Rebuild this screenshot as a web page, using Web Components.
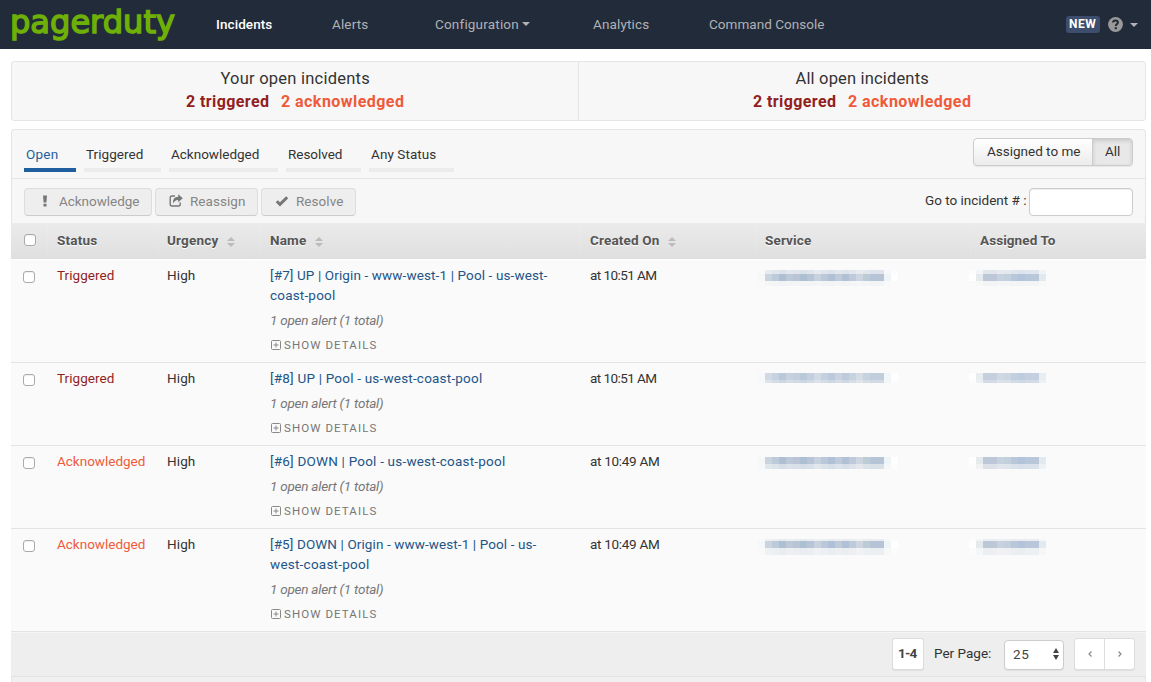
<!DOCTYPE html>
<html lang="en">
<head>
<meta charset="utf-8">
<title>Incidents</title>
<style>
html,body{margin:0;background:#fff}
body{font-family:Roboto,"Liberation Sans",sans-serif;font-size:13.5px;line-height:20px;color:#333;height:682px;overflow:hidden}
</style>
</head>
<body>
<pd-app></pd-app>
<script>
const make = (name, html, setup) => customElements.define(name, class extends HTMLElement {
  connectedCallback() {
    if (this.shadowRoot) return;
    const root = this.attachShadow({mode: 'open'});
    const t = document.createElement('template');
    t.innerHTML = typeof html === 'function' ? html(this) : html;
    root.append(t.content.cloneNode(true));
    if (setup) setup(this, root);
  }
});

// Text line tracked to a fixed measure
make('fit-text', '<style>:host{display:inline-block;white-space:pre}span{display:inline-block}</style><span><slot></slot></span>', (el, root) => {
  const w = +el.getAttribute('w'), span = root.querySelector('span');
  const n = el.textContent.length;
  el.style.width = w + 'px';
  span.style.letterSpacing = '0px';
  const natural = span.getBoundingClientRect().width;
  span.style.letterSpacing = ((w + .4 - natural) / n) + 'px';
});

make('pd-caret', '<style>:host{display:block;width:0;height:0;border:4px solid transparent;border-top-color:currentColor;border-bottom:0}</style>');

make('pd-nav', `<style>
:host{display:flex;height:49px;background:#222b3a;color:#b0b2b5;align-items:center;box-sizing:border-box;padding:0 13px 0 11px}
svg{display:block}
.logo{width:166px;height:49px;margin-right:39px}
nav{display:flex;flex:1;align-items:center;padding-bottom:1px}
a{display:flex;align-items:center;gap:4px}
.on{color:#fff;font-weight:500}
.new{background:#3c4d6e;color:#fff;font-size:12px;font-weight:700;line-height:17px;height:17px;border-radius:3px;padding:0 4px 0 3px;margin-right:8px}
.help{margin-right:7px}
</style>
<svg class="logo" viewBox="0 0 166 49"><text x="-1" y="33" textLength="165" lengthAdjust="spacingAndGlyphs" font-family="DejaVu Sans" font-size="32" fill="#6eb007" stroke="#6eb007" stroke-width="1.5">pagerduty</text></svg>
<nav>
<a class="on" style="width:116px"><fit-text w="56">Incidents</fit-text></a>
<a style="width:103px"><fit-text w="36">Alerts</fit-text></a>
<a style="width:158px"><fit-text w="83">Configuration</fit-text><pd-caret></pd-caret></a>
<a style="width:116px"><fit-text w="56">Analytics</fit-text></a>
<a><fit-text w="115">Command Console</fit-text></a>
</nav>
<span class="new"><fit-text w="27">NEW</fit-text></span>
<svg class="help" width="15" height="15" viewBox="0 0 15 15"><circle cx="7.5" cy="7.5" r="7.4" fill="#999"/><path d="M5 5.5C5.2 2.8 9.9 2.9 9.9 5.5c0 1.7-2.1 1.6-2.1 3.5" fill="none" stroke="#222b3a" stroke-width="2"/><rect x="6.7" y="10.2" width="2.2" height="2" fill="#222b3a"/></svg>
<pd-caret></pd-caret>`);

make('pd-count', `<style>
:host{display:block;flex:1;text-align:center;padding-top:6px;font-size:16.5px;line-height:22px;box-sizing:border-box}
div{display:flex;justify-content:center;gap:12px;font-size:16px;font-weight:700;line-height:24px}
.t{color:#921e1e}.a{color:#ef5a3a}
</style><slot></slot><div><fit-text w="83" class="t">2 triggered</fit-text><fit-text w="123" class="a">2 acknowledged</fit-text></div>`);

make('pd-summary', `<style>
:host{display:flex;margin:12px 5px 0 11px;height:60px;box-sizing:border-box;border:1px solid #e5e5e5;border-radius:3px;background:#f7f7f7}
.first{border-right:1px solid #e5e5e5}
</style><pd-count class="first"><fit-text w="149">Your open incidents</fit-text></pd-count><pd-count><fit-text w="133">All open incidents</fit-text></pd-count>`);

make('pd-tabs', `<style>
:host{display:flex;height:49px;box-sizing:border-box;border-bottom:1px solid #e5e5e5;padding:8px 12px 0}
.tab{height:34px;box-sizing:border-box;border-bottom:4px solid #ececec;padding:6px 0 0 2px;margin-right:8px}
.on{color:#1f5f9f;border-color:#1f5f9f}
.seg{margin-left:auto;display:flex;height:28px;box-sizing:border-box;border:1px solid #ccc;border-radius:4px;line-height:25px;overflow:hidden;background:linear-gradient(#fff,#ececec);box-shadow:0 1px 1px #0001}
.seg span{padding:0 12px 0 13px}.seg .all{padding:0 12px;background:#e8e8e8;border-left:1px solid #ccc;box-shadow:inset 0 2px 4px #0002}
</style>
<div class="tab on" style="width:52px"><fit-text w="32">Open</fit-text></div>
<div class="tab" style="width:77px"><fit-text w="57">Triggered</fit-text></div>
<div class="tab" style="width:109px"><fit-text w="88">Acknowledged</fit-text></div>
<div class="tab" style="width:75px"><fit-text w="54">Resolved</fit-text></div>
<div class="tab" style="width:85px"><fit-text w="65">Any Status</fit-text></div>
<div class="seg"><span><fit-text w="93">Assigned to me</fit-text></span><span class="all"><fit-text w="15">All</fit-text></span></div>`);

make('pd-button', `<style>
:host{display:flex;box-sizing:border-box;height:28px;border:1px solid #ddd;border-bottom-color:#ccc;border-radius:4px;background:#eee;color:#858585;align-items:center;padding:0 0 2px 13px;gap:7px}
</style><slot name="icon"></slot><slot></slot>`);

make('pd-toolbar', `<style>
:host{display:flex;height:44px;box-sizing:border-box;padding:9px 12px 0;gap:3px}
svg{display:block;width:14px;height:14px}
label{margin-left:auto;display:flex;gap:3px;line-height:25px}
input{box-sizing:border-box;width:104px;height:28px;border:1px solid #ccc;border-radius:4px;background:#fff;margin:0;box-shadow:inset 0 1px 1px #0001}
</style>
<pd-button style="width:128px"><svg slot="icon" viewBox="0 0 14 14"><path d="M5 1.5h4L8.4 8.500H5.600zM5.500 9.700h3v2.800h-3z" fill="#777"/></svg><fit-text w="80">Acknowledge</fit-text></pd-button>
<pd-button style="width:103px"><svg slot="icon" viewBox="0 0 14 14"><path d="M6 2H3Q1.200 2 1.200 3.800v6.400Q1.200 12 3 12h6.400q1.800 0 1.800-1.800V8.500" fill="none" stroke="#777" stroke-width="1.400"/><path d="M9.200.3 13.800 4.200 9.200 8.200V5.900Q5.800 5.700 4.300 9.500 3.300 2.800 9.200 2.800z" fill="#777"/></svg><fit-text w="55">Reassign</fit-text></pd-button>
<pd-button style="width:95px"><svg slot="icon" viewBox="0 0 14 14"><path d="M1.800 7.200 5 10.400 12.200 3.200" fill="none" stroke="#777" stroke-width="3"/></svg><fit-text w="47">Resolve</fit-text></pd-button>
<label><fit-text w="101">Go to incident # :</fit-text><input></label>`);

make('pd-check', `<style>:host{display:block;box-sizing:border-box;width:12px;height:12px;border:1px solid #aaa;border-radius:3px;background:#fff;box-shadow:inset 0 1px 1px #0001}</style>`);
make('pd-sort', `<style>:host{display:block;margin-left:9px}svg{display:block}</style><svg width="8" height="10" viewBox="0 0 8 10"><path d="M0 4 4 0 8 4zM0 6 4 10 8 6z" fill="#bbb"/></svg>`);

make('pd-thead', `<style>
:host{display:grid;grid-template-columns:36px 110px 103px 320px 175px 215px 1fr;height:36px;box-sizing:border-box;background:linear-gradient(#ebebeb,#dfdfdf);margin:0 -1px;font-weight:700;color:#555;text-shadow:0 1px 0 #fff}
div{display:flex;align-items:center;padding:0 0 2px 9px;border-left:1px solid #ffffff18}
.pick{padding-left:13px;border:0}
pd-sort{padding-top:3px}
</style>
<div class="pick"><pd-check></pd-check></div>
<div><fit-text w="40">Status</fit-text></div>
<div><fit-text w="51">Urgency</fit-text><pd-sort></pd-sort></div>
<div><fit-text w="36">Name</fit-text><pd-sort></pd-sort></div>
<div><fit-text w="69">Created On</fit-text><pd-sort></pd-sort></div>
<div><fit-text w="46">Service</fit-text></div>
<div><fit-text w="75">Assigned To</fit-text></div>`);

// Pixelated mask over private names; strips (top, height, strength) of 7px cells
make('pd-mask', el => {
  const kind = el.getAttribute('kind');
  const strips = el.getAttribute('strips').split(' ').map(s => s.split(','));
  const tones = kind === 'service'
    ? ['#f5f7f8','#c9d4de','#bccad9','#aebfd3','#bdc9d9','#b9c5d6','#adc0d2','#b8c5d8','#c8d2df','#bbc8d9','#b0c0d6','#c0cad9','#b1c1d5','#becad9','#cdd5e0','#bdcbd6','#b5c4d6','#b7c4d6','#eff4f7','#fefefe']
    : ['#fefefe','#e5eaed','#bcc7d8','#bdc7d8','#c7d2de','#c2cfdd','#b8c7d9','#b3c3d9','#b9c7da','#bac7d9','#e3eaef'];
  const row = ([y, h, o]) => tones.map((c, i) => `<rect x="${i * 7}" y="${y}" width="7" height="${h}" fill="${c}" opacity="${o}"/>`).join('');
  return `<style>:host{display:block;margin:5px 0 0 ${kind === 'service' ? -7 : -11}px}svg{display:block}</style>
<svg width="${tones.length * 7}" height="16" shape-rendering="crispEdges">${strips.map(row).join('')}</svg>`;
});

make('pd-row', el => {
  const status = el.getAttribute('status'), time = el.getAttribute('time'), strips = el.getAttribute('strips');
  return `<style>
:host{display:grid;grid-template-columns:36px 110px 103px 320px 175px 215px 1fr;box-sizing:border-box;margin:0 -1px;background:#fafafa;border-bottom:1px solid #e3e3e3;padding:5px 0 7px}
.c{padding-left:10px}
.ck{padding:6px 0 0 12px}
.Triggered{color:#921e1e}.Acknowledged{color:#ef5a3a}
.alert{font-style:italic;color:#777;margin:5px 0;height:20px}
.more{display:flex;align-items:center;gap:3px;height:20px;font-size:11.5px;color:#777;padding-left:1px}
svg{display:block}
.name{color:#225588}
</style>
<div class="ck"><pd-check></pd-check></div>
<div class="c ${status}"><fit-text w="${status === 'Triggered' ? 57 : 88}">${status}</fit-text></div>
<div class="c"><fit-text w="28">High</fit-text></div>
<div class="c"><div class="name"><slot></slot></div>
<div class="alert"><fit-text w="113">1 open alert (1 total)</fit-text></div>
<div class="more"><svg width="10" height="10" viewBox="0 0 10 10"><path d="M1.500.5h7q1 0 1 1v7q0 1-1 1h-7q-1 0-1-1v-7q0-1 1-1zM5 2.500v5M2.500 5h5" fill="none" stroke="#888"/></svg><fit-text w="93">SHOW DETAILS</fit-text></div></div>
<div class="c"><fit-text w="${time.includes('51') ? 66 : 69}">at ${time}</fit-text></div>
<div class="c"><pd-mask kind="service" strips="${strips}"></pd-mask></div>
<div class="c"><pd-mask kind="user" strips="${strips}"></pd-mask></div>`;
});

make('pd-pager', `<style>
:host{display:flex;height:45px;box-sizing:border-box;margin:0 -1px;background:#eee;border-top:1px solid #f5f5f5;border-bottom:1px solid #e2e2e2;justify-content:flex-end;padding:5px 11px 0 0;line-height:31px}
.box{box-sizing:border-box;border:1px solid #ddd;border-radius:3px;background:#fff;height:32px;display:flex;box-shadow:0 1px 1px #0001}
.range{width:32px;justify-content:center;font-weight:700;margin-right:10px;color:#444;line-height:29px}
.range fit-text{margin-right:2px}
.sel{width:60px;height:30px;margin:2px 10px 0 13px;border-color:#ccc;border-radius:4px;padding:0 4px 2px 8px;align-items:center;justify-content:space-between;color:#444;line-height:26px}
.step{box-sizing:border-box;width:29px;display:flex;align-items:center;justify-content:center}
.step+.step{border-left:1px solid #ddd;width:30px}
svg{display:block}
</style>
<div class="box range"><fit-text w="18">1-4</fit-text></div>
<fit-text w="57">Per Page:</fit-text>
<div class="box sel"><fit-text w="16">25</fit-text><svg width="6" height="12" viewBox="0 0 6 12"><path d="M0 5 3 0 6 5zM0 7 3 12 6 7z" fill="#444"/></svg></div>
<div class="box"><div class="step"><svg width="4" height="6"><path d="M3.500.5 1 3 3.500 5.500" fill="none" stroke="#888" stroke-width="1.200"/></svg></div><div class="step"><svg width="4" height="6"><path d="M.5.5 3 3 .5 5.500" fill="none" stroke="#888" stroke-width="1.200"/></svg></div></div>`);

make('pd-panel', `<style>
:host{display:block;margin:8px 5px 0 11px;border:1px solid #e5e5e5;border-bottom:0;border-radius:4px 4px 0 0;background:#f7f7f7}
.end{height:10px;background:#f0f0f0}
.rule{height:1px;background:#fff;margin:0 -1px}
</style>
<pd-tabs></pd-tabs><pd-toolbar></pd-toolbar><pd-thead></pd-thead><div class="rule"></div>
<pd-row status="Triggered" time="10:51 AM" strips="0,4,.4 4,7,1 11,5,.1"><fit-text w="277">[#7] UP | Origin - www-west-1 | Pool - us-west-</fit-text><br><fit-text w="65">coast-pool</fit-text></pd-row>
<pd-row status="Triggered" time="10:51 AM" strips="0,7,.85 7,3,.6"><fit-text w="212">[#8] UP | Pool - us-west-coast-pool</fit-text></pd-row>
<pd-row status="Acknowledged" time="10:49 AM" strips="1,7,1 8,5,.48"><fit-text w="235">[#6] DOWN | Pool - us-west-coast-pool</fit-text></pd-row>
<pd-row status="Acknowledged" time="10:49 AM" strips="0,2,.25 2,7,1 9,7,.22"><fit-text w="266">[#5] DOWN | Origin - www-west-1 | Pool - us-</fit-text><br><fit-text w="99">west-coast-pool</fit-text></pd-row>
<pd-pager></pd-pager><div class="end"></div>`);

make('pd-app', '<style>:host{display:block}</style><pd-nav></pd-nav><pd-summary></pd-summary><pd-panel></pd-panel>');
</script>
</body>
</html>
